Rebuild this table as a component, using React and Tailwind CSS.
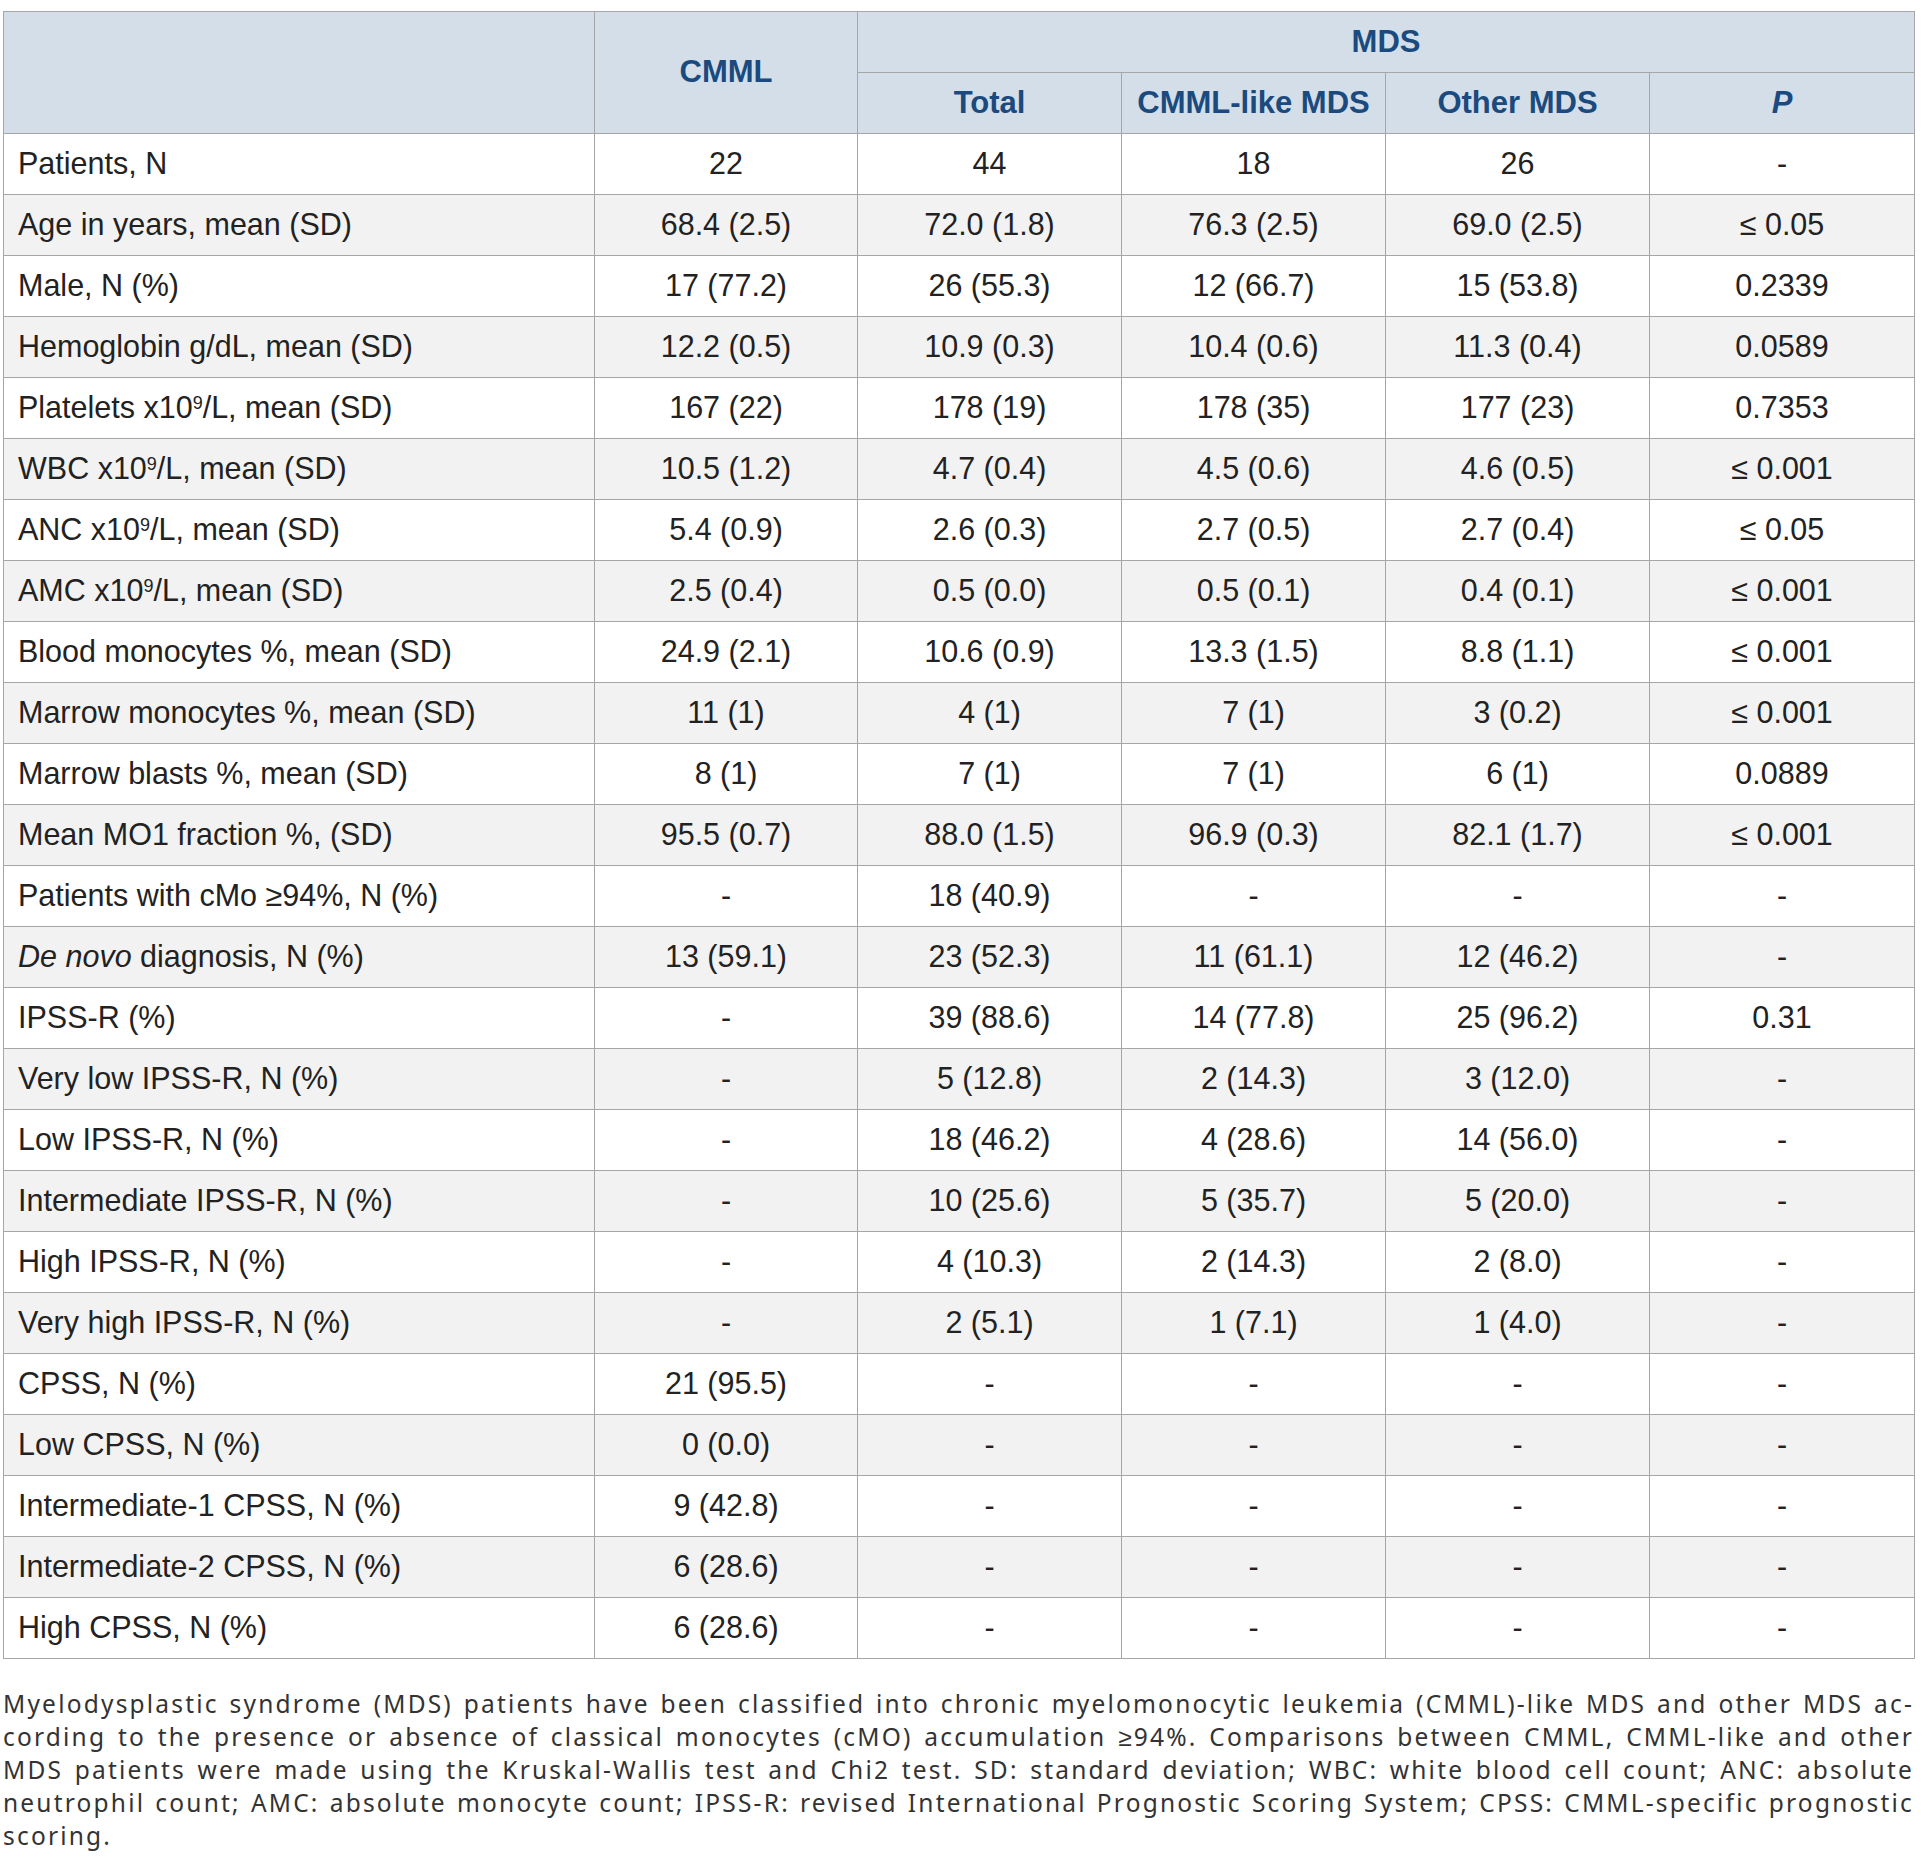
const sup9 = <sup className="text-[18px]">9</sup>;

const rows = [
  ["Patients, N", "22", "44", "18", "26", "-"],
  ["Age in years, mean (SD)", "68.4 (2.5)", "72.0 (1.8)", "76.3 (2.5)", "69.0 (2.5)", "≤ 0.05"],
  ["Male, N (%)", "17 (77.2)", "26 (55.3)", "12 (66.7)", "15 (53.8)", "0.2339"],
  ["Hemoglobin g/dL, mean (SD)", "12.2 (0.5)", "10.9 (0.3)", "10.4 (0.6)", "11.3 (0.4)", "0.0589"],
  [<>Platelets x10{sup9}/L, mean (SD)</>, "167 (22)", "178 (19)", "178 (35)", "177 (23)", "0.7353"],
  [<>WBC x10{sup9}/L, mean (SD)</>, "10.5 (1.2)", "4.7 (0.4)", "4.5 (0.6)", "4.6 (0.5)", "≤ 0.001"],
  [<>ANC x10{sup9}/L, mean (SD)</>, "5.4 (0.9)", "2.6 (0.3)", "2.7 (0.5)", "2.7 (0.4)", "≤ 0.05"],
  [<>AMC x10{sup9}/L, mean (SD)</>, "2.5 (0.4)", "0.5 (0.0)", "0.5 (0.1)", "0.4 (0.1)", "≤ 0.001"],
  ["Blood monocytes %, mean (SD)", "24.9 (2.1)", "10.6 (0.9)", "13.3 (1.5)", "8.8 (1.1)", "≤ 0.001"],
  ["Marrow monocytes %, mean (SD)", "11 (1)", "4 (1)", "7 (1)", "3 (0.2)", "≤ 0.001"],
  ["Marrow blasts %, mean (SD)", "8 (1)", "7 (1)", "7 (1)", "6 (1)", "0.0889"],
  ["Mean MO1 fraction %, (SD)", "95.5 (0.7)", "88.0 (1.5)", "96.9 (0.3)", "82.1 (1.7)", "≤ 0.001"],
  ["Patients with cMo ≥94%, N (%)", "-", "18 (40.9)", "-", "-", "-"],
  [<><i>De novo</i> diagnosis, N (%)</>, "13 (59.1)", "23 (52.3)", "11 (61.1)", "12 (46.2)", "-"],
  ["IPSS-R (%)", "-", "39 (88.6)", "14 (77.8)", "25 (96.2)", "0.31"],
  ["Very low IPSS-R, N (%)", "-", "5 (12.8)", "2 (14.3)", "3 (12.0)", "-"],
  ["Low IPSS-R, N (%)", "-", "18 (46.2)", "4 (28.6)", "14 (56.0)", "-"],
  ["Intermediate IPSS-R, N (%)", "-", "10 (25.6)", "5 (35.7)", "5 (20.0)", "-"],
  ["High IPSS-R, N (%)", "-", "4 (10.3)", "2 (14.3)", "2 (8.0)", "-"],
  ["Very high IPSS-R, N (%)", "-", "2 (5.1)", "1 (7.1)", "1 (4.0)", "-"],
  ["CPSS, N (%)", "21 (95.5)", "-", "-", "-", "-"],
  ["Low CPSS, N (%)", "0 (0.0)", "-", "-", "-", "-"],
  ["Intermediate-1 CPSS, N (%)", "9 (42.8)", "-", "-", "-", "-"],
  ["Intermediate-2 CPSS, N (%)", "6 (28.6)", "-", "-", "-", "-"],
  ["High CPSS, N (%)", "6 (28.6)", "-", "-", "-", "-"],
];

const notes = [
  "Myelodysplastic syndrome (MDS) patients have been classified into chronic myelomonocytic leukemia (CMML)-like MDS and other MDS ac-",
  "cording to the presence or absence of classical monocytes (cMO) accumulation ≥94%. Comparisons between CMML, CMML-like and other",
  "MDS patients were made using the Kruskal-Wallis test and Chi2 test. SD: standard deviation; WBC: white blood cell count; ANC: absolute",
  "neutrophil count; AMC: absolute monocyte count; IPSS-R: revised International Prognostic Scoring System; CPSS: CMML-specific prognostic",
];

const th = "border border-[#a6a6a6] font-bold text-[#1a4a7e] text-[31px] text-center p-0";

export default function App() {
  return (
    <div className="min-h-screen bg-white pl-[3px] pt-[11px] [font-family:'Liberation_Sans',Arial,sans-serif]">
      <table className="table-fixed border-collapse w-[1911px]">
        <colgroup>
          <col className="w-[591px]" />
          <col className="w-[263px]" />
          <col className="w-[264px]" />
          <col className="w-[264px]" />
          <col className="w-[264px]" />
          <col className="w-[265px]" />
        </colgroup>
        <thead className="bg-[#d3dee8]">
          <tr className="h-[61px]">
            <th rowSpan={2} className={th}></th>
            <th rowSpan={2} className={th}>CMML</th>
            <th colSpan={4} className={th}>MDS</th>
          </tr>
          <tr className="h-[61px]">
            <th className={th}>Total</th>
            <th className={th}>CMML-like MDS</th>
            <th className={th}>Other MDS</th>
            <th className={th}><i>P</i></th>
          </tr>
        </thead>
        <tbody className="text-[30.5px] text-[#222]">
          {rows.map((r, i) => (
            <tr key={i} className={i % 2 ? "h-[61px] bg-[#f2f2f2]" : "h-[61px] bg-white"}>
              {r.map((c, j) => (
                <td
                  key={j}
                  className={
                    j === 0
                      ? "border border-[#a6a6a6] pl-[14px] text-left whitespace-nowrap"
                      : "border border-[#a6a6a6] text-center whitespace-nowrap"
                  }
                >
                  {c}
                </td>
              ))}
            </tr>
          ))}
        </tbody>
      </table>

      <div className="w-[1911px] mt-[28px] [font-family:'Noto_Sans',sans-serif] text-[24.5px] leading-[33px] tracking-[2.2px] text-[#333]">
        {notes.map((l, i) => (
          <div key={i} className="text-justify [text-align-last:justify] whitespace-nowrap">
            {l}
          </div>
        ))}
        <div>scoring.</div>
      </div>
    </div>
  );
}
